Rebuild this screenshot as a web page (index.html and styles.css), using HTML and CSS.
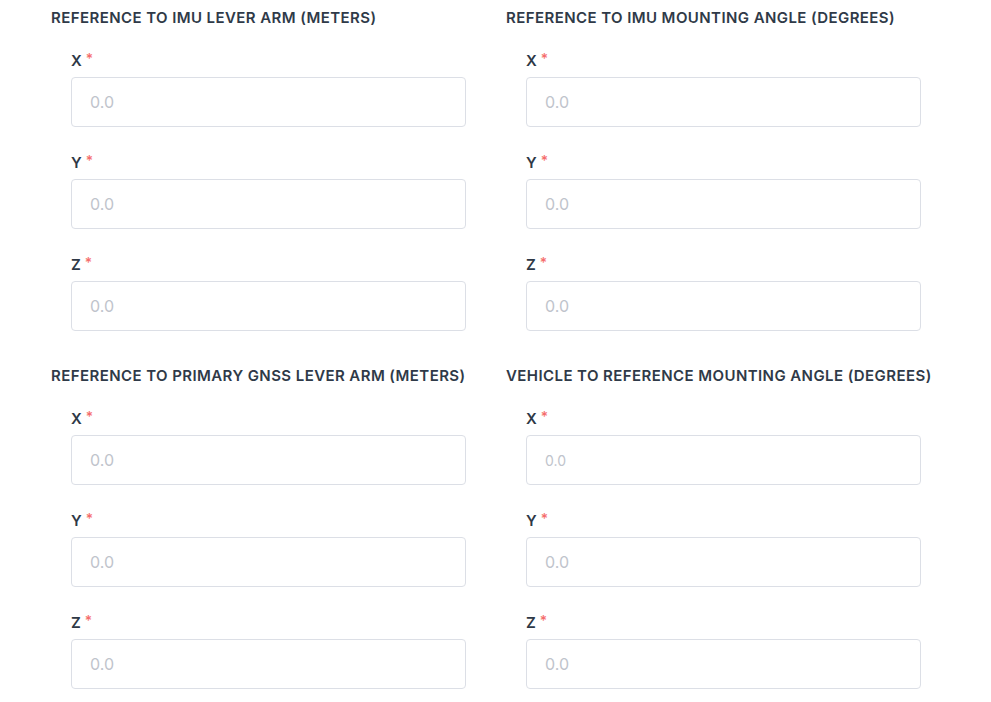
FILE: index.html
```html
<!DOCTYPE html>
<html>
<head>
<meta charset="utf-8">
<link rel="stylesheet" href="styles.css">
</head>
<body>
<div class="page">
  <section class="group">
    <h3 class="group-title">Reference to IMU Lever Arm (Meters)</h3>
    <div class="field"><label class="label">X<span class="req">*</span></label><input class="input" placeholder="0.0"></div>
    <div class="field"><label class="label">Y<span class="req">*</span></label><input class="input" placeholder="0.0"></div>
    <div class="field"><label class="label">Z<span class="req">*</span></label><input class="input" placeholder="0.0"></div>
  </section>
  <section class="group">
    <h3 class="group-title">Reference to IMU Mounting Angle (Degrees)</h3>
    <div class="field"><label class="label">X<span class="req">*</span></label><input class="input" placeholder="0.0"></div>
    <div class="field"><label class="label">Y<span class="req">*</span></label><input class="input" placeholder="0.0"></div>
    <div class="field"><label class="label">Z<span class="req">*</span></label><input class="input" placeholder="0.0"></div>
  </section>
  <section class="group">
    <h3 class="group-title">Reference to Primary GNSS Lever Arm (Meters)</h3>
    <div class="field"><label class="label">X<span class="req">*</span></label><input class="input" placeholder="0.0"></div>
    <div class="field"><label class="label">Y<span class="req">*</span></label><input class="input" placeholder="0.0"></div>
    <div class="field"><label class="label">Z<span class="req">*</span></label><input class="input" placeholder="0.0"></div>
  </section>
  <section class="group">
    <h3 class="group-title">Vehicle to Reference Mounting Angle (Degrees)</h3>
    <div class="field"><label class="label">X<span class="req">*</span></label><input class="input input-small" placeholder="0.0"></div>
    <div class="field"><label class="label">Y<span class="req">*</span></label><input class="input" placeholder="0.0"></div>
    <div class="field"><label class="label">Z<span class="req">*</span></label><input class="input" placeholder="0.0"></div>
  </section>
</div>
</body>
</html>
```

FILE: styles.css
```css
html, body {
  margin: 0;
  padding: 0;
  background: #ffffff;
  font-family: Inter, "Noto Sans", sans-serif;
}

.page {
  display: grid;
  grid-template-columns: 415px 415px;
  column-gap: 40px;
  row-gap: 35px;
  padding: 8px 0 0 51px;
}

.group {
  display: flex;
  flex-direction: column;
}

.group-title {
  margin: 0;
  font-size: 15px;
  line-height: 20px;
  font-weight: 600;
  text-transform: uppercase;
  color: #2f3a48;
  letter-spacing: 0.42px;
  white-space: nowrap;
}

.field {
  display: flex;
  flex-direction: column;
  padding-left: 20px;
  margin-top: 22px;
}

.field + .field {
  margin-top: 25px;
}

.label {
  font-size: 15px;
  line-height: 20px;
  font-weight: 600;
  color: #2e3846;
  display: flex;
  align-items: center;
  gap: 4px;
  position: relative;
  top: 1px;
}

.req {
  color: #f56c6c;
  font-size: 14px;
  font-weight: 500;
  position: relative;
  top: -2px;
}

.input {
  box-sizing: border-box;
  margin-top: 7px;
  width: 395px;
  height: 50px;
  border: 1px solid #dcdfe6;
  border-radius: 4px;
  padding: 0 18px;
  font-family: Inter, "Noto Sans", sans-serif;
  font-size: 16px;
  color: #606266;
  outline: none;
  background: #fff;
}

.input::placeholder {
  color: #c0c4cc;
}

.input-small {
  font-size: 14px;
}
```
